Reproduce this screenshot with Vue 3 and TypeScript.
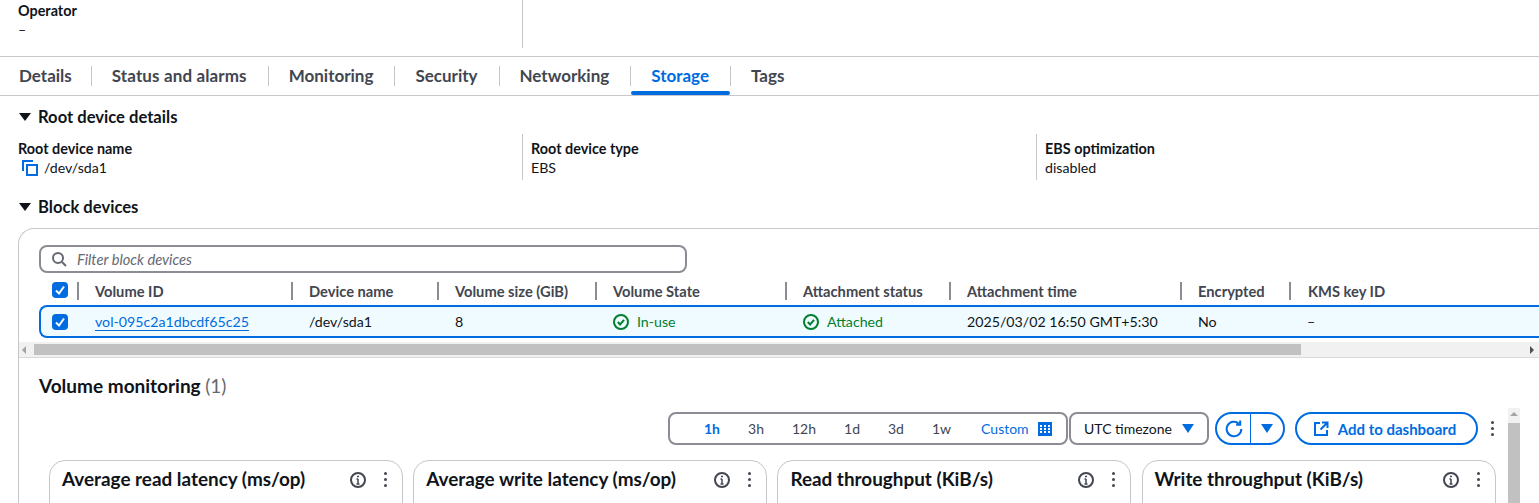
<script setup lang="ts">
const tabs = ['Details', 'Status and alarms', 'Monitoring', 'Security', 'Networking', 'Storage', 'Tags']
const activeTab = 'Storage'
const columns = ['Volume ID', 'Device name', 'Volume size (GiB)', 'Volume State', 'Attachment status', 'Attachment time', 'Encrypted', 'KMS key ID']
const ranges = ['1h', '3h', '12h', '1d', '3d', '1w']
const charts = ['Average read latency (ms/op)', 'Average write latency (ms/op)', 'Read throughput (KiB/s)', 'Write throughput (KiB/s)']
</script>

<template>
  <div class="page">
    <section class="kv top">
      <div class="kv-col">
        <div class="kv-label">Operator</div>
        <div class="kv-value">–</div>
      </div>
      <div class="kv-col"></div>
    </section>

    <nav class="tabs">
      <a v-for="tab in tabs" :key="tab" class="tab" :class="{ active: tab === activeTab }">
        <span class="tab-text">{{ tab }}</span>
      </a>
    </nav>

    <h3 class="expander first"><i class="caret"></i>Root device details</h3>
    <section class="kv root">
      <div class="kv-col">
        <div class="kv-label">Root device name</div>
        <div class="kv-value copy">
          <svg width="16" height="16" viewBox="0 0 16 16" fill="none" stroke="#006ce0" stroke-width="2">
            <path d="M1 11V1h10" />
            <rect x="5" y="5" width="10" height="10" />
          </svg>
          /dev/sda1
        </div>
      </div>
      <div class="kv-col">
        <div class="kv-label">Root device type</div>
        <div class="kv-value">EBS</div>
      </div>
      <div class="kv-col">
        <div class="kv-label">EBS optimization</div>
        <div class="kv-value">disabled</div>
      </div>
    </section>

    <h3 class="expander second"><i class="caret"></i>Block devices</h3>
    <section class="container">
      <div class="filter">
        <svg width="16" height="16" viewBox="0 0 16 16" fill="none" stroke="#656871" stroke-width="2">
          <circle cx="7" cy="7" r="5" />
          <path d="M11 11l4 4" />
        </svg>
        <span>Filter block devices</span>
      </div>

      <div class="row head">
        <div class="cell select">
          <span class="check"><svg width="14" height="14" viewBox="0 0 14 14" fill="none" stroke="#fff" stroke-width="2"><path d="M3 7.5l3 3 5-7" /></svg></span>
        </div>
        <div v-for="col in columns" :key="col" class="cell">{{ col }}</div>
      </div>

      <div class="row body">
        <div class="cell select">
          <span class="check"><svg width="14" height="14" viewBox="0 0 14 14" fill="none" stroke="#fff" stroke-width="2"><path d="M3 7.5l3 3 5-7" /></svg></span>
        </div>
        <div class="cell"><a class="link">vol-095c2a1dbcdf65c25</a></div>
        <div class="cell">/dev/sda1</div>
        <div class="cell">8</div>
        <div class="cell ok">
          <svg width="16" height="16" viewBox="0 0 16 16" fill="none" stroke="#00802f" stroke-width="2"><circle cx="8" cy="8" r="7" /><path d="M4.8 8l2.3 2.4 4-4.6" /></svg>
          In-use
        </div>
        <div class="cell ok">
          <svg width="16" height="16" viewBox="0 0 16 16" fill="none" stroke="#00802f" stroke-width="2"><circle cx="8" cy="8" r="7" /><path d="M4.8 8l2.3 2.4 4-4.6" /></svg>
          Attached
        </div>
        <div class="cell">2025/03/02 16:50 GMT+5:30</div>
        <div class="cell">No</div>
        <div class="cell">–</div>
      </div>

      <div class="hscroll">
        <i class="arrow left"></i>
        <div class="hthumb"></div>
        <i class="arrow right"></i>
      </div>

      <div class="monitor">
        <h2 class="monitor-title">Volume monitoring <span>(1)</span></h2>

        <div class="toolbar">
          <div class="ranges">
            <span v-for="(r, i) in ranges" :key="r" class="range" :class="{ on: i === 0 }">{{ r }}</span>
            <span class="custom">Custom
              <svg width="14" height="14" viewBox="0 0 14 14">
                <path fill="#006ce0" fill-rule="evenodd" d="M0 0h14v14H0zM2 3v2h2V3zm4 0v2h2V3zm4 0v2h2V3zM2 6v2h2V6zm4 0v2h2V6zm4 0v2h2V6zM2 9v2h2V9zm4 0v2h2V9zm4 0v2h2V9z" />
              </svg>
            </span>
          </div>
          <div class="tz">UTC timezone <i class="drop"></i></div>
          <div class="refresh">
            <span class="refresh-main">
              <svg width="18" height="18" viewBox="0 0 16 16" fill="none" stroke="#006ce0" stroke-width="1.8">
                <path d="M14.5 8a6.5 6.5 0 1 1-2.2-4.9" />
                <path d="M13.5 0.5v3.6H9.9" />
              </svg>
            </span>
            <span class="refresh-drop"><i class="drop"></i></span>
          </div>
          <div class="add">
            <svg width="16" height="16" viewBox="0 0 16 16" fill="none" stroke="#006ce0" stroke-width="2">
              <path d="M7 2H2v12h12V9" />
              <path d="M9 1.5h5.5V7M14 2L7.5 8.5" />
            </svg>
            Add to dashboard
          </div>
          <div class="dots"><i></i><i></i><i></i></div>
        </div>

        <div class="charts">
          <div v-for="chart in charts" :key="chart" class="chart">
            <span class="chart-title">{{ chart }}</span>
            <svg class="info" width="16" height="16" viewBox="0 0 16 16" fill="none" stroke="#424650" stroke-width="2">
              <circle cx="8" cy="8" r="7" />
              <path d="M8 12V7M6.5 7H8M6.5 12h3" stroke-width="1.5" />
              <path d="M8 3.7v1.6" />
            </svg>
            <div class="dots"><i></i><i></i><i></i></div>
          </div>
        </div>
      </div>
    </section>

    <div class="vscroll">
      <i class="arrow up"></i>
      <div class="vthumb"></div>
    </div>
  </div>
</template>

<style>
html, body {
  margin: 0;
  overflow: hidden;
  background: #fff;
}
</style>

<style scoped>
.page {
  position: relative;
  width: 1539px;
  height: 503px;
  overflow: hidden;
  font-family: Lato, "Open Sans", sans-serif;
  font-size: 14.2px;
  color: #0f141a;
}
.kv {
  display: grid;
  grid-template-columns: 513px 514px 1fr;
  padding-left: 18px;
}
.kv-col + .kv-col {
  border-left: 1px solid #c6c6cd;
  padding-left: 8px;
  margin-left: -9px;
}
.kv-label {
  font-size: 14.4px;
  font-weight: 700;
  line-height: 22px;
  margin-bottom: -2px;
}
.kv-value {
  line-height: 20px;
}
.top {
  height: 48px;
  margin-bottom: 8px;
}
.tabs {
  display: flex;
  height: 38px;
  border-top: 1px solid #c6c6cd;
  border-bottom: 1px solid #c6c6cd;
  align-items: center;
}
.tab {
  position: relative;
  height: 38px;
  padding: 0 21px;
  display: flex;
  align-items: center;
  font-size: 17px;
  font-weight: 700;
  color: #424650;
}
.tab:first-child {
  padding: 0 19px;
}
.tab:nth-child(2) {
  letter-spacing: 0.12px;
}
.tab-text {
  display: block;
  margin-top: -1px;
}
.tab + .tab::before {
  content: '';
  position: absolute;
  left: 0;
  top: 9px;
  height: 20px;
  width: 1px;
  background: #c6c6cd;
}
.tab.active {
  color: #006ce0;
}
.tab.active::after {
  content: '';
  position: absolute;
  left: 1px;
  right: 0;
  bottom: 0;
  height: 4px;
  border-radius: 2px;
  background: #006ce0;
}
.expander {
  margin: 0;
  display: flex;
  align-items: center;
  font-size: 16.6px;
  font-weight: 700;
  line-height: 22px;
  padding-left: 19px;
}
.expander.first {
  margin-top: 10px;
}
.expander.second {
  margin-top: 16px;
}
.caret {
  width: 0;
  height: 0;
  border-left: 6px solid transparent;
  border-right: 6px solid transparent;
  border-top: 8px solid #0f141a;
  margin-right: 7px;
}
.root {
  margin-top: 6px;
  height: 46px;
}
.root .kv-col {
  padding-top: 4px;
  height: 42px;
}
.copy {
  display: flex;
  align-items: center;
  gap: 6px;
  padding-left: 4px;
}
.container {
  margin: 10px 0 0 18px;
  border: 1px solid #c6c6cd;
  border-right: 0;
  border-radius: 16px 16px 0 0;
  padding: 16px 0 0 20px;
  margin-right: -20px;
}
.filter {
  width: 634px;
  height: 24px;
  border: 2px solid #8c8c94;
  border-radius: 8px;
  display: flex;
  align-items: center;
  gap: 10px;
  padding-left: 10px;
  font-style: italic;
  color: #656871;
  font-size: 14.7px;
}
.row {
  display: grid;
  grid-template-columns: 40px 214px 146px 158px 190px 164px 231px 109px 1fr;
}
.head {
  margin-top: 4px;
  height: 28px;
  align-items: center;
  font-size: 14.7px;
  font-weight: 700;
  color: #424650;
}
.head .cell {
  padding-left: 16px;
  height: 18px;
  line-height: 18px;
  border-left: 2px solid #8c8c94;
  margin-left: -2px;
}
.head .cell:last-child {
  padding-left: 17px;
}
.head .cell.select {
  border-left: 0;
  margin-left: 0;
  padding-left: 13px;
  border-right: 1px solid #c6c6cd;
  box-sizing: border-box;
}
.check {
  display: flex;
  width: 16px;
  height: 16px;
  background: #006ce0;
  border-radius: 4px;
  align-items: center;
  justify-content: center;
}
.body {
  grid-template-columns: 38px 214px 146px 158px 190px 164px 231px 109px 1fr;
  height: 29px;
  align-items: center;
  border: 2px solid #006ce0;
  border-right: 0;
  border-radius: 8px 0 0 8px;
  background: #f0fbff;
}
.body .cell {
  padding-left: 16px;
  display: flex;
  align-items: center;
  gap: 8px;
}
.body .cell.select {
  padding-left: 11px;
}
.link {
  color: #006ce0;
  text-decoration: underline;
  text-underline-offset: 3px;
}
.ok {
  color: #00802f;
}
.hscroll {
  position: relative;
  margin: 4px 0 0 -20px;
  height: 15px;
  background: #f1f1f1;
  display: flex;
  align-items: center;
}
.hthumb {
  margin-left: 15px;
  width: 1267px;
  height: 11px;
  background: #c1c1c1;
}
.arrow {
  position: absolute;
  width: 0;
  height: 0;
}
.arrow.left {
  left: 3px;
  top: 4px;
  border: 4px solid transparent;
  border-left: 0;
  border-right: 4px solid #a3a3a3;
}
.arrow.right {
  left: 1511px;
  top: 4px;
  border: 4px solid transparent;
  border-right: 0;
  border-left: 4px solid #505050;
}
.monitor {
  border-top: 1px solid #d5dbdb;
  margin-left: -20px;
  padding: 16px 0 0 20px;
}
.monitor-title {
  margin: 0;
  font-size: 19px;
  font-weight: 700;
  line-height: 24px;
}
.monitor-title span {
  font-weight: 400;
  color: #656871;
}
.toolbar {
  display: flex;
  align-items: center;
  margin-top: 14px;
  padding-left: 629px;
  height: 33px;
  font-size: 14px;
}
.ranges {
  box-sizing: border-box;
  width: 400px;
  height: 33px;
  border: 2px solid #8c8c94;
  border-radius: 8px;
  display: flex;
  align-items: center;
  padding-left: 34px;
  gap: 28px;
  color: #424650;
}
.range.on {
  color: #006ce0;
  font-weight: 700;
}
.custom {
  display: flex;
  align-items: center;
  gap: 9px;
  margin-left: 2px;
  color: #006ce0;
}
.tz {
  box-sizing: border-box;
  width: 140px;
  height: 33px;
  margin-left: 1px;
  border: 2px solid #8c8c94;
  border-radius: 8px;
  display: flex;
  align-items: center;
  justify-content: center;
  gap: 10px;
}
.drop {
  display: block;
  width: 0;
  height: 0;
  border-left: 6px solid transparent;
  border-right: 6px solid transparent;
  border-top: 9px solid #006ce0;
}
.refresh {
  box-sizing: border-box;
  width: 70px;
  height: 33px;
  margin-left: 6px;
  border: 2px solid #006ce0;
  border-radius: 17px;
  display: flex;
}
.refresh-main {
  width: 33px;
  display: flex;
  align-items: center;
  justify-content: center;
  border-right: 1px solid #006ce0;
}
.refresh-drop {
  flex: 1;
  display: flex;
  align-items: center;
  justify-content: center;
}
.add {
  box-sizing: border-box;
  width: 183px;
  height: 33px;
  margin-left: 10px;
  border: 2px solid #006ce0;
  border-radius: 17px;
  padding-right: 4px;
  display: flex;
  align-items: center;
  justify-content: center;
  gap: 9px;
  font-size: 15px;
  color: #006ce0;
  font-weight: 700;
}
.dots {
  display: flex;
  flex-direction: column;
  gap: 3px;
  width: 3px;
  margin-left: 13px;
}
.dots i {
  display: block;
  width: 3px;
  height: 3px;
  border-radius: 50%;
  background: #424650;
}
.charts {
  display: grid;
  grid-template-columns: repeat(4, 354px);
  column-gap: 10.2px;
  margin: 15px 0 0 10px;
}
.chart {
  box-sizing: border-box;
  height: 60px;
  border: 1px solid #c6c6cd;
  border-radius: 16px 16px 0 0;
  display: flex;
  align-items: flex-start;
  padding: 7px 15px 0 12px;
}
.chart-title {
  flex: 1;
  font-size: 18.9px;
  font-weight: 700;
  line-height: 22px;
}
.info {
  margin-top: 4px;
}
.chart .dots {
  margin-top: 4px;
  margin-left: 18px;
}
.vscroll {
  position: absolute;
  left: 1508px;
  top: 408px;
  width: 12px;
  height: 95px;
  background: #f1f1f1;
}
.arrow.up {
  left: 2px;
  top: 4px;
  border: 4px solid transparent;
  border-top: 0;
  border-bottom: 4px solid #a3a3a3;
}
.vthumb {
  position: absolute;
  top: 15px;
  left: 0;
  right: 0;
  bottom: 0;
  background: #c1c1c1;
}
</style>
